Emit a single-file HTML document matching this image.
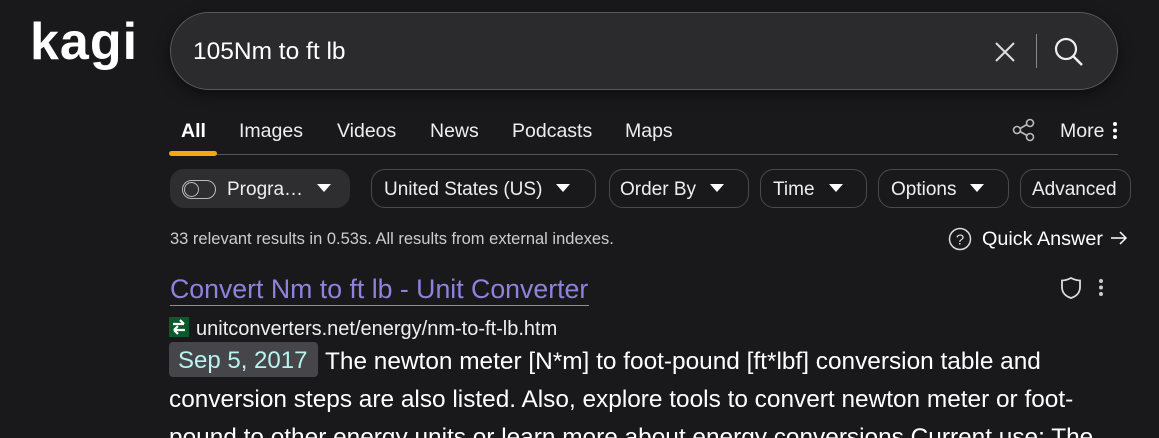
<!DOCTYPE html><html><head><style>
html,body{margin:0;width:1159px;height:438px;overflow:hidden}
body{background:#19191b;font-family:"Liberation Sans",sans-serif;color:#eee;position:relative}
.a{position:absolute;white-space:nowrap}
.pill{position:absolute;top:169px;height:37px;border:1px solid #4a4a4e;border-radius:14px;font-size:19px;line-height:39px;color:#eee;box-sizing:content-box}
.tri{display:inline-block;width:0;height:0;border-left:7px solid transparent;border-right:7px solid transparent;border-top:8px solid #fff;vertical-align:middle;margin-left:14px;margin-top:-3px}
.tab{position:absolute;top:120px;font-size:19.5px;color:#eee}
</style></head><body>
<div class="a" style="left:30px;top:12px;font-size:52px;font-weight:bold;color:#fff;letter-spacing:1px">kagi</div>
<div class="a" style="left:170px;top:12px;width:946px;height:76px;border:1px solid #5a5a5e;border-radius:39px;background:#2b2b2e;box-shadow:0 4px 14px rgba(0,0,0,.5)"></div>
<div class="a" style="left:193px;top:38px;font-size:24.5px;color:#fff">105Nm to ft lb</div>
<svg class="a" style="left:994px;top:41px" width="22" height="22"><path d="M2 2L20 20M20 2L2 20" stroke="#ddd" stroke-width="2"/></svg>
<div class="a" style="left:1036px;top:34px;width:1px;height:34px;background:#888"></div>
<svg class="a" style="left:1053px;top:36px" width="32" height="32"><circle cx="13" cy="13" r="10" stroke="#eee" stroke-width="2.2" fill="none"/><path d="M20.5 20.5L29 29" stroke="#eee" stroke-width="2.5"/></svg>
<div class="tab" style="left:181px;font-weight:bold;color:#fff">All</div>
<div class="tab" style="left:239px">Images</div>
<div class="tab" style="left:337px">Videos</div>
<div class="tab" style="left:430px">News</div>
<div class="tab" style="left:512px">Podcasts</div>
<div class="tab" style="left:625px">Maps</div>
<div class="a" style="left:170px;top:154px;width:948px;height:1px;background:#555"></div>
<div class="a" style="left:169px;top:151px;width:48px;height:5px;border-radius:3px;background:#f5a70f"></div>
<svg class="a" style="left:1012px;top:118px" width="24" height="24"><circle cx="5" cy="12" r="3.5" stroke="#bbb" stroke-width="1.6" fill="none"/><circle cx="18" cy="5" r="3.5" stroke="#bbb" stroke-width="1.6" fill="none"/><circle cx="18" cy="19" r="3.5" stroke="#bbb" stroke-width="1.6" fill="none"/><path d="M8 10.5L15 6.5M8 13.5L15 17.5" stroke="#bbb" stroke-width="1.6"/></svg>
<div class="tab" style="left:1060px">More</div>
<svg class="a" style="left:1110px;top:121px" width="10" height="20"><circle cx="5" cy="3" r="2" fill="#fff"/><circle cx="5" cy="9.5" r="2" fill="#fff"/><circle cx="5" cy="16" r="2" fill="#fff"/></svg>
<div class="pill" style="left:170px;width:178px;border-color:#2e2e31;background:#2e2e31"><span style="position:absolute;left:11px;top:10px;width:34px;height:19px;border:1px solid #bbb;border-radius:10px;box-sizing:border-box"></span><span style="position:absolute;left:13px;top:12px;width:15px;height:15px;border:1px solid #bbb;border-radius:50%;box-sizing:border-box"></span><span style="position:absolute;left:56px">Progra…<span class="tri"></span></span></div>
<div class="pill" style="left:371px;width:223px"><span style="margin-left:12px">United States (US)<span class="tri"></span></span></div>
<div class="pill" style="left:609px;width:138px"><span style="margin-left:10px">Order By<span class="tri"></span></span></div>
<div class="pill" style="left:760px;width:105px"><span style="margin-left:12px">Time<span class="tri"></span></span></div>
<div class="pill" style="left:878px;width:129px"><span style="margin-left:12px">Options<span class="tri"></span></span></div>
<div class="pill" style="left:1020px;width:109px"><span style="margin-left:11px">Advanced</span></div>
<div class="a" style="left:170px;top:230px;font-size:16.5px;color:#ccc">33 relevant results in 0.53s. All results from external indexes.</div>
<svg class="a" style="left:948px;top:227px" width="24" height="24"><circle cx="12" cy="12" r="10.5" stroke="#ddd" stroke-width="1.5" fill="none"/><text x="12" y="17.5" font-size="15" fill="#ddd" text-anchor="middle" font-family="Liberation Sans">?</text></svg>
<div class="a" style="left:982px;top:228px;font-size:19.8px;color:#fff">Quick Answer</div>
<svg class="a" style="left:1110px;top:230px" width="18" height="16"><path d="M1 8H16M10 2L16 8L10 14" stroke="#fff" stroke-width="1.5" fill="none"/></svg>
<div class="a" style="left:170px;top:274px;font-size:26.7px;color:#8e82dc">Convert Nm to ft lb - Unit Converter</div>
<div class="a" style="left:170px;top:305px;width:419px;height:1px;background:#8e82dc"></div>
<svg class="a" style="left:1060px;top:276px" width="22" height="24"><path d="M11 2C7 4 4 4.5 2 4.5V11C2 17 6 20.5 11 22C16 20.5 20 17 20 11V4.5C18 4.5 15 4 11 2Z" stroke="#ddd" stroke-width="1.8" fill="none"/></svg>
<svg class="a" style="left:1096px;top:278px" width="10" height="20"><circle cx="5" cy="3" r="2" fill="#ccc"/><circle cx="5" cy="9.5" r="2" fill="#ccc"/><circle cx="5" cy="16" r="2" fill="#ccc"/></svg>
<svg class="a" style="left:169px;top:317px" width="20" height="20"><rect width="20" height="20" fill="#0b5a2a"/><path d="M4 7H15M11 3L15 7M16 13H5M9 9L5 13M9 17L5 13" stroke="#fff" stroke-width="2.2" fill="none"/></svg>
<div class="a" style="left:196px;top:318px;font-size:20px;color:#eee">unitconverters.net/energy/nm-to-ft-lb.htm</div>
<div class="a" style="left:169px;top:342px;width:149px;height:35px;border-radius:4px;background:#45454a"></div>
<div class="a" style="left:178px;top:347px;font-size:24px;color:#b8f3ef">Sep 5, 2017</div>
<div class="a" style="left:325px;top:348px;font-size:24.4px;color:#fff">The newton meter [N*m] to foot-pound [ft*lbf] conversion table and</div>
<div class="a" style="left:169px;top:386px;font-size:24.4px;color:#fff">conversion steps are also listed. Also, explore tools to convert newton meter or foot-</div>
<div class="a" style="left:169px;top:424px;font-size:24.4px;color:#fff">pound to other energy units or learn more about energy conversions Current use: The</div>
</body></html>
